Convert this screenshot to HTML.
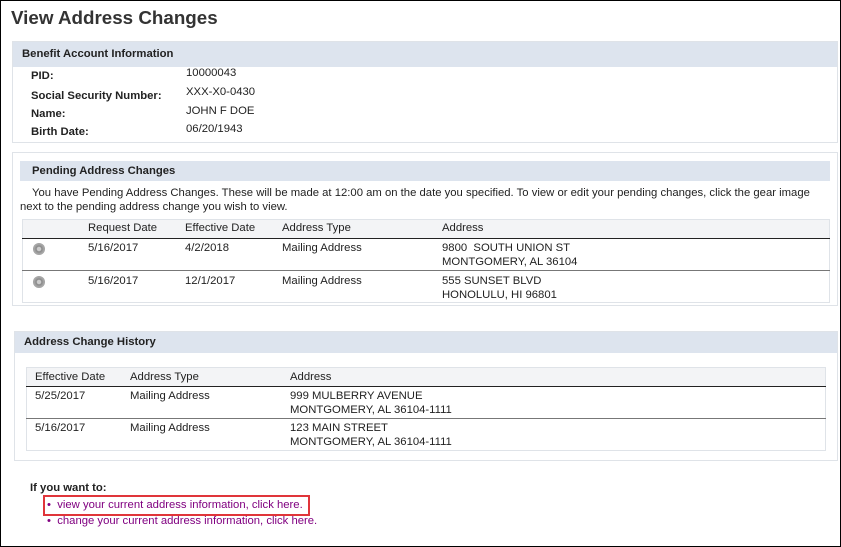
<!DOCTYPE html>
<html><head><meta charset="utf-8"><style>
*{margin:0;padding:0;box-sizing:border-box}
html,body{width:841px;height:547px;overflow:hidden;background:#fff}
body{font-family:"Liberation Sans",Arial,sans-serif;font-size:11.3px;color:#222;position:relative}
.frame{position:absolute;left:0;top:0;width:841px;height:547px;border:1px solid #000}
.a{position:absolute;white-space:nowrap;line-height:14px}
.b{font-weight:bold}
.box{position:absolute;border:1px solid #dfe3e8}
.hd{position:absolute;background:#dde4ee}
.th{position:absolute;background:#f3f4f6}
.ln{position:absolute;height:1px}
.gear{position:absolute;width:12px;height:12px;border-radius:50%;background:radial-gradient(circle at 50% 50%,#ccc 0,#ccc 22%,#888 32%,#aaa 60%,#777 100%)}
a{color:#800080;text-decoration:none}
</style></head><body>
<div class="frame"></div>
<div class="a b" style="left:11px;top:6px;font-size:18.8px;line-height:24px;color:#333">View Address Changes</div>

<div class="box" style="left:12px;top:41px;width:826px;height:102px"></div>
<div class="hd" style="left:13px;top:42px;width:824px;height:25px"></div>
<div class="a b" style="left:22px;top:47px">Benefit Account Information</div>
<div class="a b" style="left:31px;top:69px">PID:</div>
<div class="a b" style="left:31px;top:89px">Social Security Number:</div>
<div class="a b" style="left:31px;top:107px">Name:</div>
<div class="a b" style="left:31px;top:125px">Birth Date:</div>
<div class="a" style="left:186px;top:66px">10000043</div>
<div class="a" style="left:186px;top:85px">XXX-X0-0430</div>
<div class="a" style="left:186px;top:104px">JOHN F DOE</div>
<div class="a" style="left:186px;top:122px">06/20/1943</div>

<div class="box" style="left:12px;top:152px;width:826px;height:154px"></div>
<div class="hd" style="left:20px;top:161px;width:810px;height:20px"></div>
<div class="a b" style="left:32px;top:164px">Pending Address Changes</div>
<div class="a" style="left:32px;top:186px">You have Pending Address Changes. These will be made at 12:00 am on the date you specified. To view or edit your pending changes, click the gear image</div>
<div class="a" style="left:20px;top:200px">next to the pending address change you wish to view.</div>
<div class="box" style="left:22px;top:219px;width:808px;height:84px"></div>
<div class="th" style="left:23px;top:220px;width:806px;height:18px"></div>
<div class="ln" style="left:22px;top:238px;width:808px;background:#222"></div>
<div class="ln" style="left:22px;top:270px;width:808px;background:#777"></div>
<div class="a" style="left:88px;top:221px">Request Date</div>
<div class="a" style="left:185px;top:221px">Effective Date</div>
<div class="a" style="left:282px;top:221px">Address Type</div>
<div class="a" style="left:442px;top:221px">Address</div>
<div class="gear" style="left:33px;top:243px"></div>
<div class="a" style="left:88px;top:241px">5/16/2017</div>
<div class="a" style="left:185px;top:241px">4/2/2018</div>
<div class="a" style="left:282px;top:241px">Mailing Address</div>
<div class="a" style="left:442px;top:241px">9800&nbsp; SOUTH UNION ST<br>MONTGOMERY, AL 36104</div>
<div class="gear" style="left:33px;top:276px"></div>
<div class="a" style="left:88px;top:274px">5/16/2017</div>
<div class="a" style="left:185px;top:274px">12/1/2017</div>
<div class="a" style="left:282px;top:274px">Mailing Address</div>
<div class="a" style="left:442px;top:274px">555 SUNSET BLVD<br>HONOLULU, HI 96801</div>

<div class="box" style="left:14px;top:331px;width:824px;height:130px"></div>
<div class="hd" style="left:15px;top:332px;width:822px;height:21px"></div>
<div class="a b" style="left:24px;top:335px">Address Change History</div>
<div class="box" style="left:26px;top:367px;width:800px;height:84px"></div>
<div class="th" style="left:27px;top:368px;width:798px;height:18px"></div>
<div class="ln" style="left:26px;top:386px;width:800px;background:#222"></div>
<div class="ln" style="left:26px;top:418px;width:800px;background:#777"></div>
<div class="a" style="left:35px;top:370px">Effective Date</div>
<div class="a" style="left:130px;top:370px">Address Type</div>
<div class="a" style="left:290px;top:370px">Address</div>
<div class="a" style="left:35px;top:389px">5/25/2017</div>
<div class="a" style="left:130px;top:389px">Mailing Address</div>
<div class="a" style="left:290px;top:389px">999 MULBERRY AVENUE<br>MONTGOMERY, AL 36104-1111</div>
<div class="a" style="left:35px;top:421px">5/16/2017</div>
<div class="a" style="left:130px;top:421px">Mailing Address</div>
<div class="a" style="left:290px;top:421px">123 MAIN STREET<br>MONTGOMERY, AL 36104-1111</div>

<div class="a b" style="left:30px;top:481px">If you want to:</div>
<div style="position:absolute;left:43px;top:495px;width:267px;height:21px;border:2px solid #e0353a"></div>
<div class="a" style="left:47px;top:498px;color:#800080">•&nbsp; <a>view your current address information, click here.</a></div>
<div class="a" style="left:47px;top:514px;color:#800080">•&nbsp; <a>change your current address information, click here.</a></div>
</body></html>
